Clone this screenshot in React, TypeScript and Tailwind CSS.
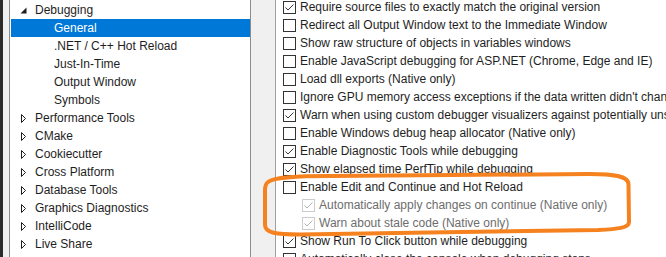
import { ReactNode } from 'react';

type TreeItem = { label: string; level: 0 | 1; expanded?: boolean; selected?: boolean };

const treeItems: TreeItem[] = [
  { label: 'Debugging', level: 0, expanded: true },
  { label: 'General', level: 1, selected: true },
  { label: '.NET / C++ Hot Reload', level: 1 },
  { label: 'Just-In-Time', level: 1 },
  { label: 'Output Window', level: 1 },
  { label: 'Symbols', level: 1 },
  { label: 'Performance Tools', level: 0 },
  { label: 'CMake', level: 0 },
  { label: 'Cookiecutter', level: 0 },
  { label: 'Cross Platform', level: 0 },
  { label: 'Database Tools', level: 0 },
  { label: 'Graphics Diagnostics', level: 0 },
  { label: 'IntelliCode', level: 0 },
  { label: 'Live Share', level: 0 },
];

type Option = { label: string; checked: boolean; disabled?: boolean; indent?: boolean };

const options: Option[] = [
  { label: 'Require source files to exactly match the original version', checked: true },
  { label: 'Redirect all Output Window text to the Immediate Window', checked: false },
  { label: 'Show raw structure of objects in variables windows', checked: false },
  { label: 'Enable JavaScript debugging for ASP.NET (Chrome, Edge and IE)', checked: false },
  { label: 'Load dll exports (Native only)', checked: false },
  { label: "Ignore GPU memory access exceptions if the data written didn't change", checked: false },
  { label: 'Warn when using custom debugger visualizers against potentially unsafe processes', checked: true },
  { label: 'Enable Windows debug heap allocator (Native only)', checked: false },
  { label: 'Enable Diagnostic Tools while debugging', checked: true },
  { label: 'Show elapsed time PerfTip while debugging', checked: true },
  { label: 'Enable Edit and Continue and Hot Reload', checked: false },
  { label: 'Automatically apply changes on continue (Native only)', checked: true, disabled: true, indent: true },
  { label: 'Warn about stale code (Native only)', checked: true, disabled: true, indent: true },
  { label: 'Show Run To Click button while debugging', checked: true },
  { label: 'Automatically close the console when debugging stops', checked: false },
];

function Expander({ expanded }: { expanded: boolean }) {
  // 展开: 实心三角, 折叠: 空心三角
  return (
    <svg width="7" height="9" viewBox="0 0 7 9" className="shrink-0">
      {expanded ? (
        <path d="M6.5 1.5 L6.5 7.5 L0.5 7.5 Z" fill="#1e1e1e" />
      ) : (
        <path d="M1.5 0.5 L5.5 4.5 L1.5 8.5 Z" fill="none" stroke="#1e1e1e" strokeWidth="1" />
      )}
    </svg>
  );
}

function CheckBox({ checked, disabled }: { checked: boolean; disabled?: boolean }) {
  return (
    <div
      className={`w-[13px] h-[13px] shrink-0 border bg-white flex items-center justify-center ${
        disabled ? 'border-[#cccccc]' : 'border-[#333333]'
      }`}
    >
      {checked && (
        <svg width="11" height="11" viewBox="0 0 11 11">
          <path
            d="M1.5 5.5 L4 8 L9.5 2.5"
            fill="none"
            stroke={disabled ? '#b4b4b4' : '#333333'}
            strokeWidth="1"
          />
        </svg>
      )}
    </div>
  );
}

function TreeRow({ item }: { item: TreeItem }) {
  let content: ReactNode;
  if (item.level === 0) {
    content = (
      <>
        <div className="w-[25px] pl-[10px] flex items-center">
          <Expander expanded={!!item.expanded} />
        </div>
        <span>{item.label}</span>
      </>
    );
  } else {
    content = <span className="pl-[44px]">{item.label}</span>;
  }
  return (
    <div
      className={`h-[18px] flex items-center whitespace-nowrap ${
        item.selected ? 'bg-[#0078d7] text-white ml-[1px]' : 'text-[#1e1e1e]'
      }`}
    >
      {item.selected ? <span className="pl-[43px]">{item.label}</span> : content}
    </div>
  );
}

function OptionRow({ opt }: { opt: Option }) {
  return (
    <div className={`h-[18px] flex items-center gap-[4px] whitespace-nowrap ${opt.indent ? 'pl-[19px]' : ''}`}>
      <CheckBox checked={opt.checked} disabled={opt.disabled} />
      <span className={opt.disabled ? 'text-[#6d6d6d]' : 'text-[#1e1e1e]'}>{opt.label}</span>
    </div>
  );
}

export default function App() {
  return (
    <div className="relative w-[666px] h-[257px] overflow-hidden flex bg-[#f0f0f0] text-[12px] leading-[18px] font-['Liberation_Sans',Arial,sans-serif]">
      <div className="w-[3px] bg-[#2b2b2b]" />
      <div className="w-[6px]" />

      {/* 左侧树 */}
      <div className="w-[242px] bg-white border-l border-r border-[#8c8c8c] pt-[1px] overflow-hidden">
        {treeItems.map((item) => (
          <TreeRow key={item.label} item={item} />
        ))}
      </div>

      <div className="w-[24px]" />

      {/* 右侧选项 */}
      <div className="flex-1 bg-white border-l border-[#a0a0a0] pl-[7px] overflow-hidden">
        <div className="-mt-[2px]">
          {options.map((opt) => (
            <OptionRow key={opt.label} opt={opt} />
          ))}
        </div>
      </div>

      {/* 橙色标注圈 */}
      <svg className="absolute left-0 top-0 pointer-events-none" width="666" height="257" viewBox="0 0 666 257">
        <path
          d="M268 182 C274 177 296 176 330 176 L590 174 C614 174 628 176 628.5 184 L629 222 C629 228 618 229 598 230 L300 234.5 C276 234.5 265 233 265 225 L265 190 C265 186 266 183.5 268 182 Z"
          fill="none"
          stroke="#f5821f"
          strokeWidth="4"
        />
      </svg>
    </div>
  );
}
